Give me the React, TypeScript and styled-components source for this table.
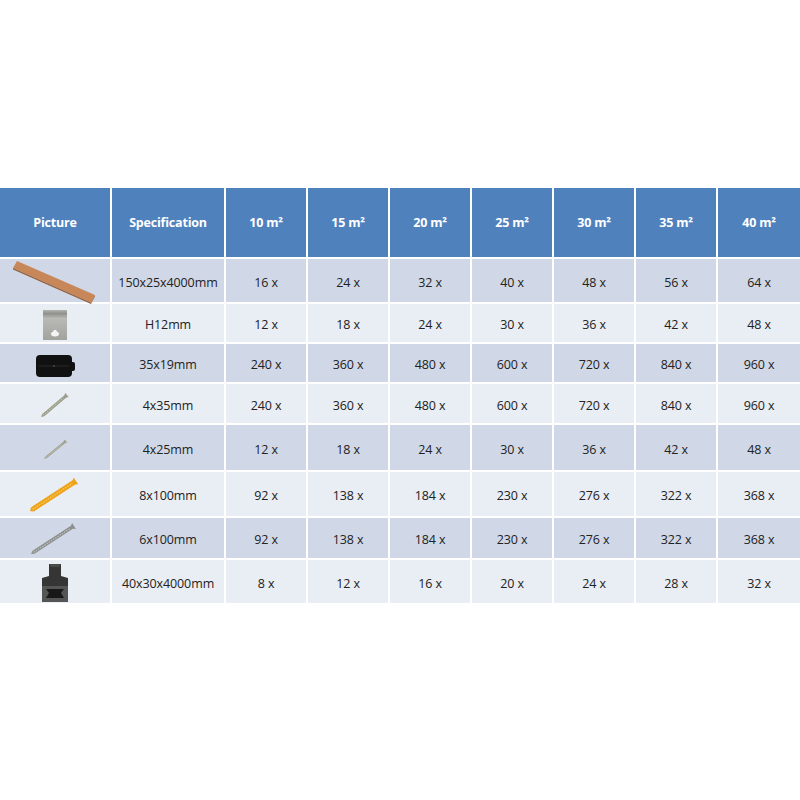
import React from "react";
import styled, { createGlobalStyle } from "styled-components";

const GlobalStyle = createGlobalStyle`
  html, body {
    margin: 0;
    padding: 0;
    background: #ffffff;
  }
  body {
    font-family: "Open Sans", "Liberation Sans", sans-serif;
  }
`;

const Page = styled.div`
  width: 800px;
  height: 800px;
  padding-top: 188px;
  box-sizing: border-box;
`;

const Table = styled.div`
  display: grid;
  grid-template-columns: 110px 112px repeat(6, 80px) 1fr;
  grid-template-rows: 69px 43px 38px 38px 39px 45px 44px 40px 43px;
  gap: 2px;
  width: 800px;
`;

const HeadCell = styled.div`
  background: #4f81bd;
  color: #ffffff;
  font-weight: 700;
  font-size: 12.5px;
  display: flex;
  align-items: center;
  justify-content: center;
  letter-spacing: -0.2px;
`;

const Cell = styled.div<{ $dark: boolean }>`
  background: ${(p) => (p.$dark ? "#d0d8e8" : "#e9edf4")};
  color: #222222;
  font-size: 12.5px;
  display: flex;
  align-items: center;
  justify-content: center;
  padding-top: 3px;
  letter-spacing: -0.1px;
`;

const Board = () => (
  <svg width="100" height="44" viewBox="0 0 100 44">
    <polygon points="12,1 90,35 86,42.5 8,8" fill="#c88758" />
    <polygon points="8,8 86,42.5 86,44 8,9.6" fill="#93633f" />
    <polygon points="86,42.5 90,35 90,36.6 86,44" fill="#a26c45" />
  </svg>
);

const Clip = () => (
  <svg width="40" height="36" viewBox="0 0 40 36">
    <defs>
      <linearGradient id="clipg" x1="0" y1="0" x2="0" y2="1">
        <stop offset="0" stopColor="#b4b5b1" />
        <stop offset="0.12" stopColor="#8f908c" />
        <stop offset="0.28" stopColor="#b9bab6" />
        <stop offset="1" stopColor="#a2a39f" />
      </linearGradient>
    </defs>
    <rect x="8" y="3" width="24" height="30" fill="url(#clipg)" />
    <ellipse cx="20" cy="27" rx="4" ry="2.4" fill="#f4f4f4" />
    <circle cx="20" cy="24.5" r="1.8" fill="#f4f4f4" />
  </svg>
);

const BlackClip = () => (
  <svg width="44" height="28" viewBox="0 0 44 28">
    <rect x="3" y="4" width="36" height="22" rx="4" fill="#111111" />
    <rect x="37" y="11" width="5" height="9" rx="2" fill="#111111" />
    <line x1="6" y1="15" x2="36" y2="15" stroke="#2a2a2a" strokeWidth="1" />
    <circle cx="21" cy="15" r="1" fill="#444" />
  </svg>
);

// thin tapered fastener drawn along a diagonal, flared head at the top-right end
const Fastener = ({
  from,
  to,
  w,
  head,
  body,
  thread,
  width,
  height,
}: {
  from: [number, number];
  to: [number, number];
  w: number;
  head: number;
  body: string;
  thread: string;
  width: number;
  height: number;
}) => {
  const [x1, y1] = from;
  const [x2, y2] = to;
  const dx = x2 - x1;
  const dy = y2 - y1;
  const len = Math.sqrt(dx * dx + dy * dy);
  const ux = dx / len;
  const uy = dy / len;
  const px = -uy;
  const py = ux;
  const hw = w / 2;
  const hh = head / 2;
  const nx = x2 - ux * 2.5;
  const ny = y2 - uy * 2.5;
  const pts = [
    [x1, y1],
    [x1 + ux * 3 + px * hw, y1 + uy * 3 + py * hw],
    [nx + px * hw, ny + py * hw],
    [x2 + px * hh, y2 + py * hh],
    [x2 - px * hh, y2 - py * hh],
    [nx - px * hw, ny - py * hw],
    [x1 + ux * 3 - px * hw, y1 + uy * 3 - py * hw],
  ]
    .map((p) => p.join(","))
    .join(" ");
  return (
    <svg width={width} height={height} viewBox={`0 0 ${width} ${height}`}>
      <polygon points={pts} fill={body} />
      <line
        x1={x1 + ux * 3}
        y1={y1 + uy * 3}
        x2={nx - ux * 2}
        y2={ny - uy * 2}
        stroke={thread}
        strokeWidth={w / 3}
        strokeDasharray="1.4 1.2"
      />
    </svg>
  );
};

const Joist = () => (
  <svg width="34" height="42" viewBox="0 0 34 42">
    <polygon points="11,2 23,2 23,14 30,16 30,40 4,40 4,16 11,14" fill="#353535" />
    <polygon points="11,2 23,2 21,5 13,5" fill="#4a4a4a" />
    <polygon points="4,24 30,24 30,40 4,40" fill="#555555" />
    <polygon points="8,27 26,27 23,31 26,36 8,36 11,31" fill="#181818" />
  </svg>
);

type Row = { pic: React.ReactNode; spec: string; counts: string[] };

const rows: Row[] = [
  { pic: <Board />, spec: "150x25x4000mm", counts: ["16", "24", "32", "40", "48", "56", "64"] },
  { pic: <Clip />, spec: "H12mm", counts: ["12", "18", "24", "30", "36", "42", "48"] },
  { pic: <BlackClip />, spec: "35x19mm", counts: ["240", "360", "480", "600", "720", "840", "960"] },
  {
    pic: (
      <Fastener from={[14, 32]} to={[40, 10]} w={3} head={5} body="#9a9d89" thread="#d2d4c4" width={56} height={40} />
    ),
    spec: "4x35mm",
    counts: ["240", "360", "480", "600", "720", "840", "960"],
  },
  {
    pic: (
      <Fastener from={[17, 32]} to={[39, 14]} w={2.2} head={3.6} body="#a0a391" thread="#d6d8ca" width={56} height={44} />
    ),
    spec: "4x25mm",
    counts: ["12", "18", "24", "30", "36", "42", "48"],
  },
  {
    pic: (
      <Fastener from={[5, 36]} to={[51, 6]} w={5} head={8} body="#eea21a" thread="#f8c850" width={60} height={42} />
    ),
    spec: "8x100mm",
    counts: ["92", "138", "184", "230", "276", "322", "368"],
  },
  {
    pic: (
      <Fastener from={[4, 34]} to={[47, 6]} w={3.6} head={7} body="#8e9090" thread="#c0c2c2" width={56} height={40} />
    ),
    spec: "6x100mm",
    counts: ["92", "138", "184", "230", "276", "322", "368"],
  },
  { pic: <Joist />, spec: "40x30x4000mm", counts: ["8", "12", "16", "20", "24", "28", "32"] },
];

const areas = ["10", "15", "20", "25", "30", "35", "40"];

export default function App() {
  return (
    <>
      <GlobalStyle />
      <Page>
        <Table>
          <HeadCell>Picture</HeadCell>
          <HeadCell>Specification</HeadCell>
          {areas.map((a) => (
            <HeadCell key={a}>{a} m²</HeadCell>
          ))}
          {rows.map((r, i) => {
            const dark = i % 2 === 0;
            return (
              <React.Fragment key={r.spec}>
                <Cell $dark={dark}>{r.pic}</Cell>
                <Cell $dark={dark}>{r.spec}</Cell>
                {r.counts.map((c, j) => (
                  <Cell key={j} $dark={dark}>
                    {c} x
                  </Cell>
                ))}
              </React.Fragment>
            );
          })}
        </Table>
      </Page>
    </>
  );
}
